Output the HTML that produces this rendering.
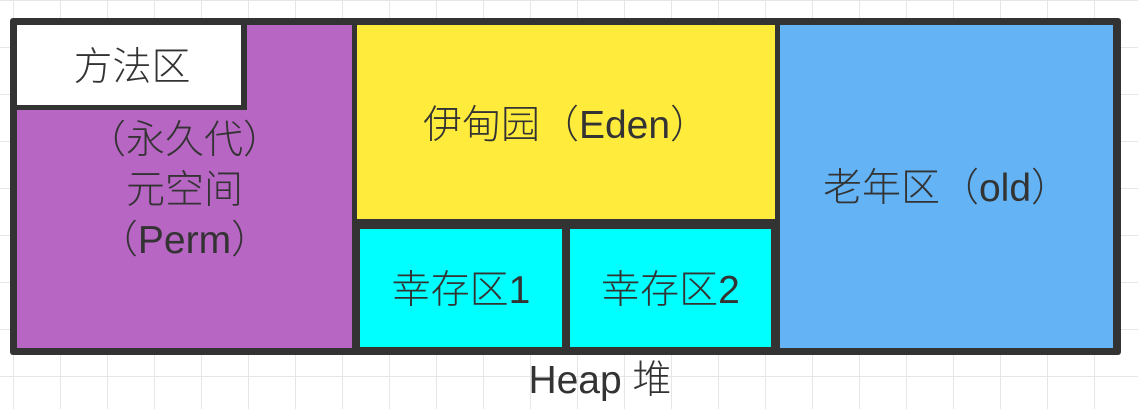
<!DOCTYPE html>
<html><head><meta charset="utf-8"><style>
body{margin:0;width:1138px;height:409px;overflow:hidden;background:#fff;
background-image:linear-gradient(#e6e6e6 1px,transparent 1px),linear-gradient(90deg,#e6e6e6 1px,transparent 1px);
background-size:47px 47px;background-position:13px 0;position:relative;
font-family:"Liberation Sans","Noto Sans CJK SC",sans-serif;color:#333}
.b{position:absolute;box-sizing:border-box}
.t{position:absolute;font-size:39px;font-weight:300;white-space:nowrap;text-align:center;line-height:1}
</style></head><body>
<div class="b" style="left:10px;top:18px;width:1111px;height:337px;background:#333;border-radius:3px"></div>
<div class="b" style="left:17px;top:25px;width:335px;height:323px;background:#b866c4"></div>
<div class="b" style="left:17px;top:25px;width:230px;height:85px;background:#333"></div>
<div class="b" style="left:17px;top:25px;width:224px;height:80px;background:#fff"></div>
<div class="b" style="left:357px;top:25px;width:418px;height:194px;background:#ffeb3b"></div>
<div class="b" style="left:360px;top:229px;width:202px;height:118px;background:#00ffff"></div>
<div class="b" style="left:570px;top:229px;width:201px;height:118px;background:#00ffff"></div>
<div class="b" style="left:780px;top:25px;width:333px;height:323px;background:#63b3f5"></div>
<div class="t" style="left:17px;width:230px;top:48px">方法区</div>
<div class="t" style="left:17px;width:335px;top:116px;line-height:50px">（永久代）<br>元空间<br>（Perm）</div>
<div class="t" style="left:357px;width:418px;top:106px">伊甸园（Eden）</div>
<div class="t" style="left:360px;width:202px;top:271px">幸存区1</div>
<div class="t" style="left:570px;width:201px;top:271px">幸存区2</div>
<div class="t" style="left:780px;width:333px;top:169px">老年区（old）</div>
<div class="t" style="left:400px;width:400px;top:361px">Heap 堆</div>
</body></html>
